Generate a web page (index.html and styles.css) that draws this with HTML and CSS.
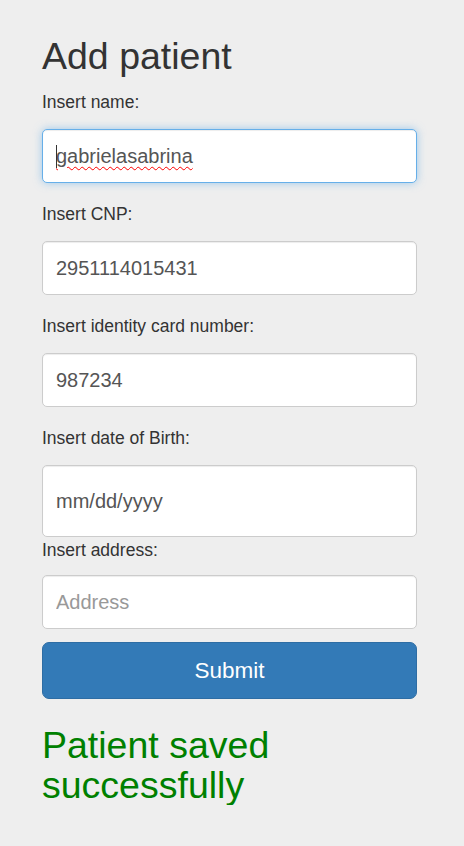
FILE: index.html
```html
<!DOCTYPE html>
<html>
<head>
<meta charset="utf-8">
<title>Add patient</title>
<link rel="stylesheet" href="styles.css">
</head>
<body>
<div class="page">
  <h2 class="title">Add patient</h2>
  <form class="form">
    <label class="label">Insert name:</label>
    <div class="field">
      <input class="input input-focus" type="text" value="gabrielasabrina">
      <span class="spell" aria-hidden="true">gabrielasabrina</span>
      <span class="caret"></span>
    </div>
    <label class="label">Insert CNP:</label>
    <div class="field">
      <input class="input" type="text" value="2951114015431">
    </div>
    <label class="label">Insert identity card number:</label>
    <div class="field">
      <input class="input" type="text" value="987234">
    </div>
    <label class="label">Insert date of Birth:</label>
    <div class="field field-date">
      <input class="input input-date" type="text" value="mm/dd/yyyy">
    </div>
    <label class="label label-tight">Insert address:</label>
    <div class="field field-last">
      <input class="input" type="text" placeholder="Address">
    </div>
    <button class="btn" type="button">Submit</button>
  </form>
  <h2 class="success">Patient saved successfully</h2>
</div>
</body>
</html>
```
FILE: styles.css
```css
html, body {
  margin: 0;
  padding: 0;
  background: #eeeeee;
}
body {
  font-family: "Liberation Sans", Arial, Helvetica, sans-serif;
  color: #333333;
}
.page {
  width: 375px;
  margin-left: 42px;
  padding-top: 36px;
}
.title {
  margin: 0 0 13px 0;
  font-size: 37.5px;
  font-weight: normal;
  line-height: 41px;
  color: #333333;
}
.form {
  display: flex;
  flex-direction: column;
}
.label {
  display: block;
  font-size: 17.5px;
  line-height: 25px;
  margin-bottom: 14px;
  color: #333333;
}
.label-tight {
  margin-bottom: 12px;
}
.field {
  position: relative;
  margin-bottom: 19px;
}
.field-date {
  margin-bottom: 1px;
}
.field-last {
  margin-bottom: 13px;
}
.input {
  display: block;
  box-sizing: border-box;
  width: 100%;
  height: 54px;
  margin: 0;
  padding: 0 13px;
  border: 1px solid #cccccc;
  border-radius: 5px;
  background: #ffffff;
  font-family: "Liberation Sans", Arial, Helvetica, sans-serif;
  font-size: 20px;
  color: #555555;
  box-shadow: inset 0 1px 1px rgba(0, 0, 0, 0.075);
  outline: none;
}
.input::placeholder {
  color: #999999;
}
.input-focus {
  border-color: #66afe9;
  box-shadow: inset 0 1px 1px rgba(0, 0, 0, 0.075), 0 0 8px rgba(102, 175, 233, 0.6);
}
.input-date {
  height: 72px;
}
.spell {
  position: absolute;
  left: 14px;
  top: 15px;
  font-family: "Liberation Sans", Arial, Helvetica, sans-serif;
  font-size: 20px;
  line-height: 24px;
  color: transparent;
  text-decoration-line: underline;
  text-decoration-style: wavy;
  text-decoration-color: #ff0000;
  text-decoration-thickness: 1px;
  text-underline-offset: 3px;
  pointer-events: none;
}
.caret {
  position: absolute;
  left: 14px;
  top: 16px;
  width: 1px;
  height: 23px;
  background: #333333;
}
.btn {
  display: block;
  box-sizing: border-box;
  width: 100%;
  height: 57px;
  margin: 0;
  padding: 0;
  border: 1px solid #2e6da4;
  border-radius: 7px;
  background: #337ab7;
  color: #ffffff;
  font-family: "Liberation Sans", Arial, Helvetica, sans-serif;
  font-size: 22.5px;
  cursor: pointer;
}
.success {
  margin: 26px 0 0 0;
  font-size: 37.5px;
  font-weight: normal;
  line-height: 40px;
  color: #008000;
}
```
